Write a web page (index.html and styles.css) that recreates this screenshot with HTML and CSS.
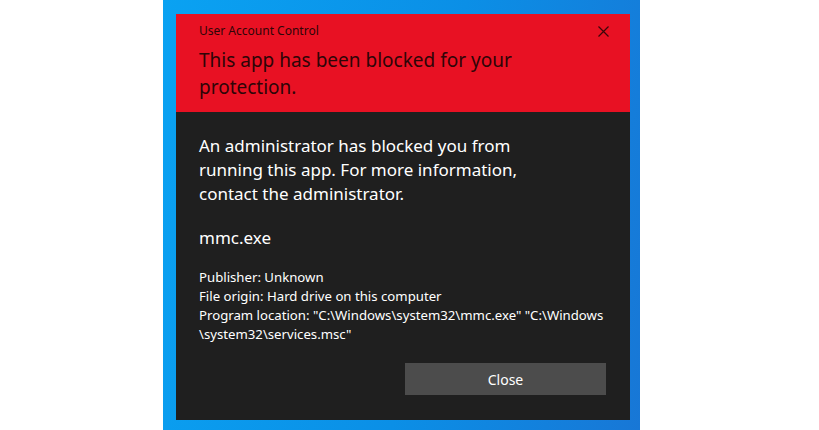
FILE: index.html
```html
<!doctype html>
<html lang="en">
<head>
    <meta charset="UTF-8">
    <title>User Account Control</title>
    <link rel="stylesheet" href="styles.css">
</head>
<body>
    <div class="desktop">
        <div class="dialog">
            <div class="dialog-head">
                <div class="caption">
                    <span>User Account Control</span>
                    <svg class="close-x" width="11" height="11" viewBox="0 0 11 11">
                        <path d="M0.5 0.5 L10.5 10.5 M10.5 0.5 L0.5 10.5" stroke="#3a0709" stroke-width="1.2" fill="none"/>
                    </svg>
                </div>
                <h1 class="heading">This app has been blocked for your protection.</h1>
            </div>
            <div class="dialog-body">
                <p class="message">An administrator has blocked you from running this app. For more information, contact the administrator.</p>
                <p class="program">mmc.exe</p>
                <ul class="details">
                    <li>Publisher: Unknown</li>
                    <li>File origin: Hard drive on this computer</li>
                    <li>Program location: "C:\Windows\system32\mmc.exe" "C:\Windows \system32\services.msc"</li>
                </ul>
                <div class="actions">
                    <button class="btn">Close</button>
                </div>
            </div>
        </div>
    </div>
</body>
</html>
```

FILE: styles.css
```css
*{
    margin: 0;
    padding: 0;
    box-sizing: border-box;
}
body{
    background: #fff;
    font-family: "Noto Sans", "Open Sans", sans-serif;
    height: 430px;
    overflow: hidden;
}
li{
    list-style: none;
}
.desktop{
    margin-left: 163px;
    width: 477px;
    height: 430px;
    padding: 14px 0 0 13px;
    background: linear-gradient(100deg, #0aa2f2 0%, #0b8fe6 55%, #1877d6 100%);
}
.dialog{
    width: 454px;
    height: 406px;
    background: #1f1f1f;
}
.dialog-head{
    height: 98px;
    background: #e81123;
    padding: 7px 21px 0 23px;
    color: #2e0507;
}
.caption{
    display: flex;
    justify-content: space-between;
    align-items: center;
    font-size: 12px;
    height: 18px;
}
.close-x{
    margin-top: 2px;
}
.heading{
    font-weight: normal;
    font-size: 19px;
    line-height: 27px;
    margin-top: 8px;
    width: 330px;
}
.dialog-body{
    padding: 22px 24px 0 23px;
    color: #fff;
}
.message{
    font-size: 17px;
    line-height: 24px;
    width: 330px;
}
.program{
    font-size: 17px;
    line-height: 24px;
    margin-top: 20px;
}
.details{
    margin-top: 18px;
    font-size: 13.2px;
    line-height: 19px;
}
.actions{
    display: flex;
    justify-content: flex-end;
    margin-top: 19px;
}
.btn{
    width: 201px;
    height: 32px;
    background: #4c4c4c;
    border: none;
    color: #fff;
    font-family: inherit;
    font-size: 14px;
}
```
